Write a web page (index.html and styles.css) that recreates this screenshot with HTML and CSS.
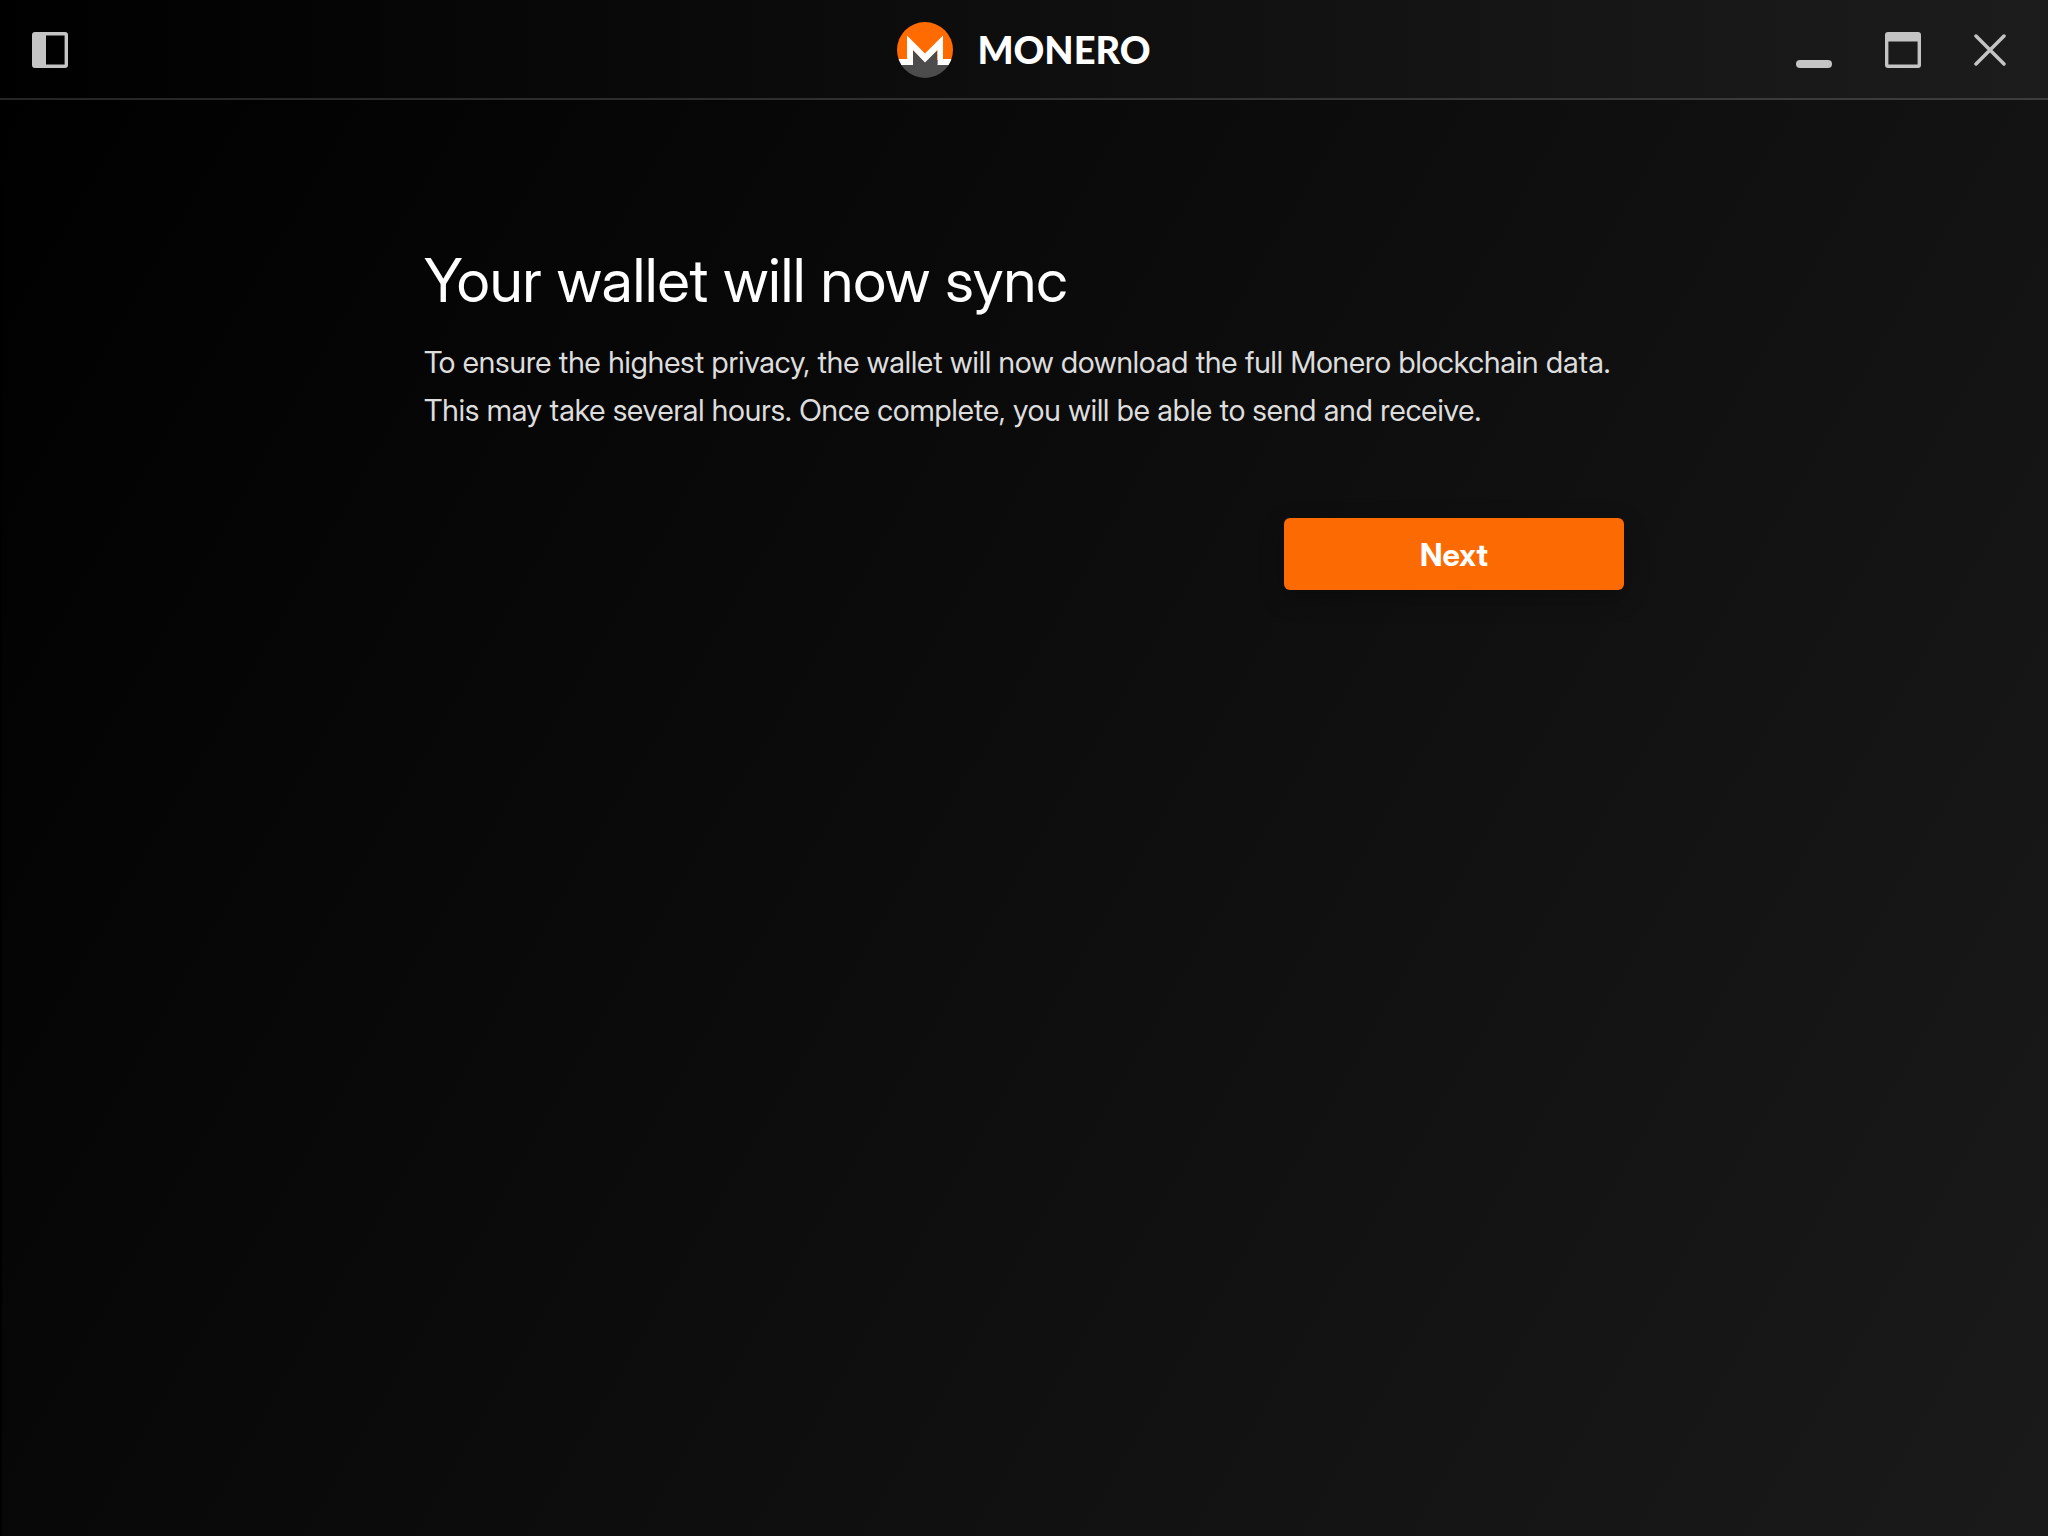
FILE: index.html
```html
<!DOCTYPE html>
<html lang="en">
<head>
<meta charset="utf-8">
<meta name="viewport" content="width=device-width, initial-scale=1">
<title>Monero</title>
<link rel="stylesheet" href="styles.css">
</head>
<body>
<header class="titlebar">
  <div class="titlebar-start">
    <button class="icon-button" type="button" aria-label="Toggle sidebar">
      <svg width="36" height="36" viewBox="0 0 36 36"><path fill="currentColor" fill-rule="evenodd" d="M3 0h30a3 3 0 0 1 3 3v30a3 3 0 0 1-3 3H3a3 3 0 0 1-3-3V3a3 3 0 0 1 3-3zM14 3.400v29h18.600v-29z"/></svg>
    </button>
  </div>
  <div class="brand">
    <svg width="56" height="56" viewBox="0 0 56 56" aria-hidden="true">
      <defs><clipPath id="disc"><circle cx="28" cy="28" r="28"/></clipPath></defs>
      <g clip-path="url(#disc)">
        <path fill="#ff6b00" d="M0 0h56v38H0z"/>
        <path fill="#4c4c4c" d="M0 42h56v14H0zM16 28l12 12 12-12v16H16z"/>
        <path fill="#fff" d="M0 37h10V13.500l18 18 18-18V37h10v6H40.500V28L28 40.500 16 28v15H0z"/>
      </g>
    </svg>
    <span class="brand-name">MONERO</span>
  </div>
  <div class="titlebar-end">
    <button class="icon-button" type="button" aria-label="Minimize">
      <svg width="36" height="36" viewBox="0 0 36 36"><rect y="28" width="36" height="8" rx="4" fill="currentColor"/></svg>
    </button>
    <button class="icon-button" type="button" aria-label="Maximize">
      <svg width="36" height="36" viewBox="0 0 36 36"><path fill="currentColor" fill-rule="evenodd" d="M3 0h30a3 3 0 0 1 3 3v30a3 3 0 0 1-3 3H3a3 3 0 0 1-3-3V3a3 3 0 0 1 3-3zM3.400 9.500v23h29.200v-23z"/></svg>
    </button>
    <button class="icon-button" type="button" aria-label="Close">
      <svg width="32" height="32" viewBox="0 0 32 32"><path fill="none" stroke="currentColor" stroke-width="3.500" stroke-linecap="round" d="M2 2l28 28M30 2L2 30"/></svg>
    </button>
  </div>
</header>
<main class="content">
  <section class="step">
    <h1 class="step-title">Your wallet will now sync</h1>
    <p class="step-text">To ensure the highest privacy, the wallet will now download the full Monero blockchain data. This may take several hours. Once complete, you will be able to send and receive.</p>
    <div class="step-actions">
      <button class="primary-button" type="button">Next</button>
    </div>
  </section>
</main>
</body>
</html>
```
FILE: styles.css
```css
* {
  box-sizing: border-box;
}

body {
  display: flex;
  flex-direction: column;
  min-height: 100vh;
  margin: 0;
  background: #000;
  color: #fff;
  font-family: "Inter Display", Inter, "Liberation Sans", sans-serif;
}

.titlebar {
  display: grid;
  grid-template-columns: 1fr auto 1fr;
  align-items: center;
  height: 100px;
  padding: 2px 32px 0;
  border-bottom: 2px solid rgba(255, 255, 255, 0.15);
  background: linear-gradient(90deg, #000, #1c1c1c) border-box;
}

.titlebar-start,
.titlebar-end,
.brand {
  display: flex;
  align-items: center;
}

.titlebar-end {
  justify-content: flex-end;
  gap: 53px;
  padding-right: 10px;
}

.brand {
  gap: 24px;
}

.brand-name {
  padding-bottom: 2px;
  font: 900 38px/56px Lato, sans-serif;
}

.icon-button {
  display: block;
  padding: 0;
  border: 0;
  background: none;
  color: #c4c4c4;
  cursor: pointer;
}

.icon-button svg {
  display: block;
}

.content {
  flex: 1;
  padding: 140px 24px;
  background: linear-gradient(120deg, #000, #1a1a1a);
  box-shadow: inset 2px 0 #000;
}

.step {
  max-width: 1200px;
  margin: 0 auto;
}

.step-title {
  margin: 0;
  font-size: 60px;
  font-weight: 400;
  line-height: 80px;
}

.step-text {
  margin: 18px 0 0;
  color: #ddd;
  font-size: 30px;
  line-height: 48px;
}

.step-actions {
  display: flex;
  justify-content: flex-end;
  margin-top: 84px;
}

.primary-button {
  width: 340px;
  height: 72px;
  padding: 2px 0 0;
  border: 0;
  border-radius: 6px;
  background: #fc6a03;
  box-shadow: 0 8px 24px rgba(0, 0, 0, 0.25);
  color: #fff;
  font: 700 31px/40px "Inter Display", Inter, sans-serif;
  cursor: pointer;
}
```
